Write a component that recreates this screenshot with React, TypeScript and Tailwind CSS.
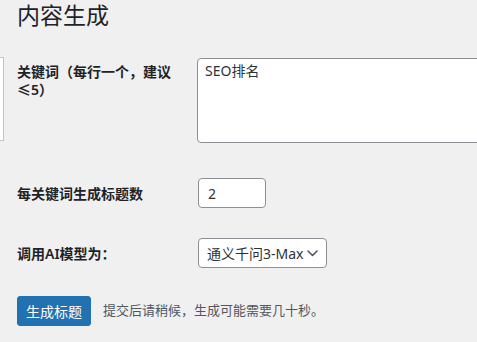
import React from 'react'

const font = { fontFamily: '"Noto Sans", "Noto Sans CJK SC", sans-serif' }

export default function App() {
    return (
        <div className="w-[477px] h-[342px] overflow-hidden bg-[#f0f0f1] text-[#1d2327]" style={font}>
            <h1 className="pl-[17px] pt-[1px] text-[23px] leading-[29px] font-normal">内容生成</h1>

            {/* keywords */}
            <div className="flex items-start mt-[28px]">
                <div className="w-[4px] h-[84px] -mt-[1px] shrink-0 bg-white border border-l-0 border-[#c3c4c7]" />
                <label className="ml-[13px] w-[180px] shrink-0 pr-[8px] pt-[5px] text-[14px] leading-[18px] font-semibold">
                    关键词（每行一个，建议<br />≤5）
                </label>
                <textarea
                    className="w-[300px] h-[85px] shrink-0 resize-none rounded-[4px] border border-[#8c8f94] bg-white px-[7px] pt-[2px] text-[14px] leading-[20px] text-[#2c3338] outline-none"
                    defaultValue="SEO排名"
                    style={font}
                />
            </div>

            {/* titles per keyword */}
            <div className="flex items-center pl-[17px] mt-[35px]">
                <label className="w-[181px] shrink-0 text-[14px] font-semibold">每关键词生成标题数</label>
                <input
                    className="w-[68px] h-[30px] rounded-[4px] border border-[#8c8f94] bg-white px-[9px] text-[14px] text-[#2c3338] outline-none"
                    defaultValue="2"
                    style={font}
                />
            </div>

            {/* model */}
            <div className="flex items-center pl-[17px] mt-[30px]">
                <label className="w-[181px] shrink-0 text-[14px] font-semibold">调用AI模型为：</label>
                <div className="flex items-center justify-between w-[129px] h-[30px] rounded-[4px] border border-[#8c8f94] bg-white pl-[8px] pr-[8px] text-[14px] text-[#2c3338]">
                    <span>通义千问3-Max</span>
                    <svg width="11" height="7" viewBox="0 0 11 7" fill="none">
                        <path d="M1 1l4.5 4.5L10 1" stroke="#50575e" strokeWidth="1.6" strokeLinecap="round" strokeLinejoin="round" />
                    </svg>
                </div>
            </div>

            {/* submit */}
            <div className="flex items-center pl-[17px] mt-[28px]">
                <button className="h-[30px] px-[8px] rounded-[3px] border border-[#2271b1] bg-[#2271b1] text-[14px] text-white" style={font}>
                    生成标题
                </button>
                <span className="ml-[12px] text-[13px] text-[#50575e]">提交后请稍候，生成可能需要几十秒。</span>
            </div>
        </div>
    )
}
